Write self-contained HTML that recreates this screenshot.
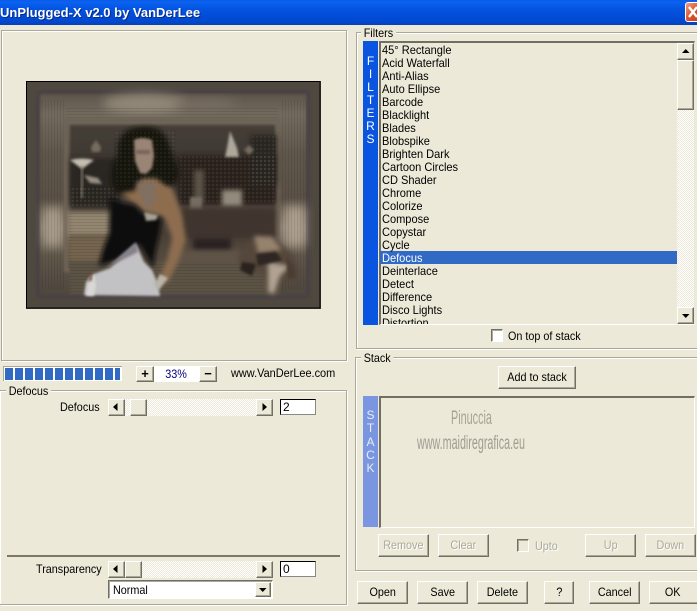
<!DOCTYPE html>
<html><head><meta charset="utf-8">
<style>
html,body{margin:0;padding:0}
body{width:697px;height:611px;overflow:hidden;background:#ece9d8;position:relative;font:12px "Liberation Sans",sans-serif;color:#000}
div,span{position:absolute;box-sizing:border-box;white-space:nowrap}
.g{border:1px solid #aca899;box-shadow:inset 1px 1px #fff,1px 1px #fff}
.l{background:#ece9d8;padding:0 3px;line-height:13px;height:13px;font-size:12px}
.b{background:#ece9d8;border:1px solid;border-color:#fff #716f64 #716f64 #fff;box-shadow:inset -1px -1px #aca899;text-align:center;line-height:20px;font-size:12px}
.b span{position:static;display:inline-block;transform:scaleX(.9)}
.d{color:#aca899;text-shadow:1px 1px #fff}
.x{transform:scaleX(.9);transform-origin:0 0}
.t{left:382px;height:13px;line-height:13px;font-size:12px;transform:scaleX(.92);transform-origin:0 0}
.h{background:repeating-conic-gradient(#fff 0 25%,#ece9d8 0 50%) 0 0/2px 2px}
.i{background:#fff;border:1px solid #000;border-right-color:#888;border-bottom-color:#888;line-height:14px;padding-left:2px;font-size:12px}
.v{left:363px;width:15px;color:#fff;text-align:center;font-size:12px;line-height:13px}
.c{background:#fff;border:1px solid;border-color:#716f64 #fff #fff #716f64;box-shadow:inset 1px 1px #aca899}
svg{position:absolute}
</style></head><body>

<div style="left:0;top:0;width:697px;height:25px;background:linear-gradient(#0a5be8 0,#0b62f0 8%,#0454e2 35%,#0048d0 85%,#0a3fb8 100%)"></div>
<div style="left:0;top:2px;height:20px;color:#fff;font:bold 13px/22px 'Liberation Sans',sans-serif;text-shadow:1px 1px #0a2a88">UnPlugged-X v2.0 by VanDerLee</div>
<div style="left:685px;top:2px;width:20px;height:20px;border-radius:3px;background:linear-gradient(135deg,#f0a080,#d8502c 50%,#c03a18);border:1px solid #fff"></div>
<svg style="left:688px;top:6px" width="9" height="12"><path d="M1 1L9 11M9 1L1 11" stroke="#fff" stroke-width="2.4"/></svg>

<!-- preview panel -->
<div class="g" style="left:1px;top:30px;width:346px;height:331px"></div>
<svg style="left:26px;top:81px" width="295" height="228" viewBox="26 81 295 228">
<defs>
<filter id="b1" x="-30%" y="-30%" width="160%" height="160%"><feGaussianBlur stdDeviation="1.200"/></filter>
<filter id="b2" x="-30%" y="-30%" width="160%" height="160%"><feGaussianBlur stdDeviation="2.500"/></filter>
<filter id="b4" x="-50%" y="-50%" width="200%" height="200%"><feGaussianBlur stdDeviation="5"/></filter>
<linearGradient id="fr" x1="0" y1="0" x2="0" y2="1">
<stop offset="0" stop-color="#5d554b"/><stop offset=".1" stop-color="#736a5e"/><stop offset=".3" stop-color="#5f564b"/><stop offset=".52" stop-color="#5a5045"/><stop offset=".66" stop-color="#8f8272"/><stop offset=".8" stop-color="#5f564a"/><stop offset="1" stop-color="#4e463d"/></linearGradient>
<linearGradient id="ins" x1="0" y1="0" x2="0" y2="1">
<stop offset="0" stop-color="#453e37"/><stop offset=".4" stop-color="#3a342e"/><stop offset=".55" stop-color="#554a40"/><stop offset=".75" stop-color="#4a4036"/><stop offset="1" stop-color="#5a4f43"/></linearGradient>
<pattern id="dith" width="4" height="4" patternUnits="userSpaceOnUse"><rect width="2" height="2" fill="#b0a898"/><rect x="2" y="2" width="2" height="2" fill="#0f0d0c"/></pattern>
<pattern id="st" width="3" height="3" patternUnits="userSpaceOnUse"><rect width="3" height="1" fill="#000" opacity=".09"/></pattern>
<pattern id="sv" width="3" height="3" patternUnits="userSpaceOnUse"><rect width="1" height="3" fill="#000" opacity=".08"/></pattern>
</defs>
<rect x="26" y="81" width="295" height="228" fill="#4f483f"/>
<rect x="40" y="94" width="267" height="202" fill="url(#fr)" filter="url(#b1)"/>
<rect x="38" y="92" width="270" height="205" fill="none" stroke="#453e48" stroke-width="2" filter="url(#b1)"/>
<ellipse cx="145" cy="104" rx="42" ry="10" fill="#918777" filter="url(#b4)"/>
<ellipse cx="205" cy="105" rx="32" ry="6" fill="#776d60" filter="url(#b4)"/>
<rect x="44" y="208" width="18" height="38" fill="#a89c8b" filter="url(#b4)"/>
<rect x="285" y="206" width="20" height="40" fill="#ac9f8f" filter="url(#b4)"/>
<rect x="40" y="100" width="25" height="190" fill="url(#sv)"/>
<rect x="282" y="100" width="25" height="190" fill="url(#sv)"/>
<rect x="66" y="106" width="212" height="16" fill="url(#st)"/>
<rect x="66" y="120" width="212" height="150" fill="none" stroke="#6e6357" stroke-width="4" filter="url(#b1)"/>
<rect x="70" y="125" width="205" height="145" fill="url(#ins)" filter="url(#b1)"/>
<!-- left bright + lamp -->
<rect x="70" y="158" width="50" height="50" fill="#2c2724" filter="url(#b2)"/>
<path d="M70 160q12-3 24 0l-8 6-4 3-4-3z" fill="#c4beb1" filter="url(#b1)"/>
<path d="M84 175l14 3 4 6-12-1z" fill="#968e81" filter="url(#b1)"/>
<rect x="81" y="166" width="2" height="32" fill="#7f776b" filter="url(#b1)"/>
<path d="M96 140l5 7-1 5h-8l-1-5z" fill="#756c5e" filter="url(#b1)"/>
<rect x="70" y="186" width="50" height="20" fill="url(#dith)" opacity=".12"/>
<rect x="68" y="212" width="50" height="24" fill="#93866f" filter="url(#b2)"/>
<rect x="68" y="236" width="46" height="26" fill="#75654f" filter="url(#b2)"/>
<rect x="68" y="212" width="50" height="50" fill="url(#st)"/>
<!-- skyline -->
<rect x="178" y="155" width="98" height="50" fill="#29241f" filter="url(#b2)"/>
<rect x="250" y="135" width="27" height="50" fill="#2b2623" filter="url(#b2)"/>
<rect x="178" y="156" width="98" height="46" fill="url(#dith)" opacity=".1"/>
<rect x="250" y="135" width="27" height="50" fill="url(#dith)" opacity=".08"/>
<path d="M230 131l7 17 2 9-14 0 2-9z" fill="#aea79c" filter="url(#b1)"/>
<path d="M249 145l5 5-5 5-5-5z" fill="#756c60" filter="url(#b1)"/>
<rect x="194" y="170" width="10" height="34" fill="#5a5247" filter="url(#b2)"/>
<rect x="222" y="190" width="20" height="16" fill="#938a7d" filter="url(#b2)"/>
<rect x="190" y="197" width="12" height="14" fill="#756c60" filter="url(#b1)"/>
<rect x="180" y="208" width="96" height="30" fill="#3f362e" filter="url(#b2)"/>
<rect x="193" y="238" width="38" height="14" fill="#2a2420" filter="url(#b2)"/>
<rect x="170" y="250" width="70" height="18" fill="#5f5346" filter="url(#b2)"/>
<rect x="70" y="262" width="210" height="32" fill="#5c5245" filter="url(#b1)"/>
<rect x="70" y="262" width="210" height="32" fill="url(#st)"/>
<!-- object right -->
<path d="M251 240l22-3 20 18 7 16-4 12-14-3-8 15-6-2-4-18-22-8-4-8 10-12z" fill="#54463a" filter="url(#b2)"/>
<path d="M254 236l18 1 10 13-24 3z" fill="#96836e" filter="url(#b2)"/>
<path d="M268 262l22 4-10 10-6 18-6-2z" fill="#b0a393" filter="url(#b2)"/>
<path d="M256 254l20-2 6 8-24 6z" fill="#2e2620" filter="url(#b1)"/>
<path d="M242 262l14 2-4 12-12-6z" fill="#2a231e" filter="url(#b1)"/>
<path d="M286 256l8 10 2 12-8 1z" fill="#4a3c30" filter="url(#b1)"/>
<!-- skin: chest + arm -->
<path d="M122 192L140 178L158 178L172 188L182 215L186 240L178 262L168 282L160 284L162 272L168 258L172 238L166 220L162 216L146 212L132 202z" fill="#8e6d50" filter="url(#b2)"/>
<!-- hair -->
<path d="M122 135q6-8 24-8q16 0 22 14q3 10 6 16q6 12 4 22q-4 8-12 6l-10-8-14 0-8 14-18 2q-6-12-4-24q2-8 6-14q-2-12 4-20z" fill="#151211" filter="url(#b2)"/>
<rect x="114" y="130" width="62" height="55" fill="url(#dith)" opacity=".08"/>
<!-- face -->
<path d="M134 140q8-4 18 0l2 16-2 12-6 6-6-1-5-12z" fill="#9a8474" filter="url(#b1)"/>
<path d="M136 150h14v4h-14z" fill="#75635a" filter="url(#b1)"/>
<path d="M136 182l20 0-2 22-8 6z" fill="#7f7062" filter="url(#b2)"/>
<!-- black dress -->
<path d="M110 198q14 6 24 6l10 10 18 4-2 14-4 18-3 18-14-24-20 16-20 6q2-14 10-32z" fill="#0c0a0a" filter="url(#b2)"/>
<path d="M144 212l14 3-2 5-10 1z" fill="#a8a193" filter="url(#b1)"/>
<!-- white skirt -->
<path d="M136 244l-26 24-16 6-8 8-2 13 76 1-2-12-6-14-8-8z" fill="#c2c1c3" filter="url(#b1)"/>
<path d="M136 242l-30 26 32-16z" fill="#85818a" filter="url(#b1)"/>
<path d="M94 274l-5 4-3 18h8l2-10z" fill="#dad8d6" filter="url(#b1)"/>
<path d="M92 270l-4 12 4-2z" fill="#6d4a3a" filter="url(#b1)"/>
<path d="M160 274l-6 11 5 5 9-12z" fill="#bab5a8" filter="url(#b1)"/>
<rect x="26.500" y="81.500" width="293.500" height="226.500" fill="none" stroke="#000"/>
</svg>

<!-- progress & zoom -->
<div style="left:3px;top:366px;width:119px;height:15px;background:#fff;box-shadow:inset 1px 1px #aca899"></div>
<div style="left:5px;top:368px;width:115px;height:12px;background:repeating-linear-gradient(90deg,#316ac5 0 8px,#fff 8px 10px)"></div>
<div style="left:154px;top:366px;width:45px;height:16px;background:#fff;color:#00007a;text-align:center;line-height:16px;font-size:12px"><span style="position:static;display:inline-block;transform:scaleX(.9)">33%</span></div>
<div class="b" style="left:136px;top:366px;width:18px;height:16px;line-height:13px;font-weight:bold;font-size:13px">+</div>
<div class="b" style="left:199px;top:366px;width:18px;height:16px;line-height:13px;font-weight:bold;font-size:13px">−</div>
<div style="left:231px;top:366px;line-height:16px;font-size:11.500px;transform:scaleX(.95);transform-origin:0 0">www.VanDerLee.com</div>

<!-- defocus group -->
<div class="g" style="left:0;top:390px;width:347px;height:215px;border-left:0"></div>
<div class="l x" style="left:6px;top:385px">Defocus</div>
<div class="x" style="left:60px;top:400px;line-height:14px">Defocus</div>
<div class="h" style="left:124px;top:399px;width:132px;height:17px"></div>
<div class="b" style="left:108px;top:399px;width:17px;height:17px"></div>
<svg style="left:113px;top:403px" width="6" height="8"><path d="M4.500 0v8L0 4z"/></svg>
<div class="b" style="left:130px;top:399px;width:17px;height:17px"></div>
<div class="b" style="left:256px;top:399px;width:17px;height:17px"></div>
<svg style="left:262px;top:403px" width="6" height="8"><path d="M0.500 0v8L5 4z"/></svg>
<div class="i" style="left:280px;top:399px;width:36px;height:16px">2</div>

<div style="left:7px;top:555px;width:333px;height:2px;background:#7d7867"></div>
<div class="x" style="left:36px;top:562px;line-height:14px">Transparency</div>
<div class="h" style="left:124px;top:561px;width:132px;height:17px"></div>
<div class="b" style="left:108px;top:561px;width:17px;height:17px"></div>
<svg style="left:113px;top:565px" width="6" height="8"><path d="M4.500 0v8L0 4z"/></svg>
<div class="b" style="left:125px;top:561px;width:17px;height:17px"></div>
<div class="b" style="left:256px;top:561px;width:17px;height:17px"></div>
<svg style="left:262px;top:565px" width="6" height="8"><path d="M0.500 0v8L5 4z"/></svg>
<div class="i" style="left:280px;top:561px;width:36px;height:16px">0</div>
<div class="c" style="left:108px;top:580px;width:165px;height:19px;padding-left:4px;line-height:18px;font-size:12px"><span class="x" style="position:static;display:inline-block">Normal</span></div>
<div class="b" style="left:255px;top:582px;width:16px;height:15px"></div>
<svg style="left:259px;top:588px" width="8" height="4"><path d="M0 0h7.500L3.750 4z"/></svg>

<!-- filters group -->
<div class="g" style="left:356px;top:32px;width:345px;height:317px"></div>
<div class="l x" style="left:361px;top:27px">Filters</div>
<div style="left:363px;top:41px;width:15px;height:284px;background:#0a55e0"></div>
<div class="v" style="top:55px">F</div><div class="v" style="top:68px">I</div><div class="v" style="top:81px">L</div><div class="v" style="top:94px">T</div><div class="v" style="top:107px">E</div><div class="v" style="top:120px">R</div><div class="v" style="top:133px">S</div>
<div style="left:379px;top:41px;width:316px;height:284px;background:#ece9d8;border:1px solid;border-width:2px 1px 1px 2px;border-color:#716f64 #ece9d8 #fff #716f64;overflow:hidden"></div>
<div style="left:380px;top:251px;width:297px;height:13px;background:#316ac5"></div>
<div class="t" style="top:44px">45° Rectangle</div>
<div class="t" style="top:57px">Acid Waterfall</div>
<div class="t" style="top:70px">Anti-Alias</div>
<div class="t" style="top:83px">Auto Ellipse</div>
<div class="t" style="top:96px">Barcode</div>
<div class="t" style="top:109px">Blacklight</div>
<div class="t" style="top:122px">Blades</div>
<div class="t" style="top:135px">Blobspike</div>
<div class="t" style="top:148px">Brighten Dark</div>
<div class="t" style="top:161px">Cartoon Circles</div>
<div class="t" style="top:174px">CD Shader</div>
<div class="t" style="top:187px">Chrome</div>
<div class="t" style="top:200px">Colorize</div>
<div class="t" style="top:213px">Compose</div>
<div class="t" style="top:226px">Copystar</div>
<div class="t" style="top:239px">Cycle</div>
<div class="t" style="top:252px;color:#fff">Defocus</div>
<div class="t" style="top:265px">Deinterlace</div>
<div class="t" style="top:278px">Detect</div>
<div class="t" style="top:291px">Difference</div>
<div class="t" style="top:304px">Disco Lights</div>
<div class="t" style="top:317px;height:7px;overflow:hidden">Distortion</div>
<div class="h" style="left:677px;top:43px;width:17px;height:281px"></div>
<div class="b" style="left:677px;top:43px;width:17px;height:17px"></div>
<svg style="left:682px;top:49px" width="8" height="4"><path d="M0 4h7.500L3.750 0z"/></svg>
<div class="b" style="left:677px;top:60px;width:17px;height:50px"></div>
<div class="b" style="left:677px;top:307px;width:17px;height:17px"></div>
<svg style="left:682px;top:314px" width="8" height="4"><path d="M0 0h7.500L3.750 4z"/></svg>
<div class="c" style="left:491px;top:329px;width:12px;height:13px"></div>
<div class="x" style="left:508px;top:329px;line-height:14px">On top of stack</div>

<!-- stack group -->
<div class="g" style="left:355px;top:357px;width:346px;height:214px"></div>
<div class="l x" style="left:361px;top:352px">Stack</div>
<div class="b" style="left:498px;top:366px;width:78px;height:23px;line-height:21px"><span>Add to stack</span></div>
<div style="left:363px;top:396px;width:15px;height:131px;background:#7b96e0"></div>
<div class="v" style="top:409px;color:#e8ecf8">S</div><div class="v" style="top:422px;color:#e8ecf8">T</div><div class="v" style="top:436px;color:#e8ecf8">A</div><div class="v" style="top:449px;color:#e8ecf8">C</div><div class="v" style="top:462px;color:#e8ecf8">K</div>
<div style="left:379px;top:396px;width:316px;height:132px;border:1px solid;border-width:2px 1px 1px 2px;border-color:#716f64 #fff #fff #716f64"></div>
<div style="left:451px;top:408px;color:#a6a397;font-size:19px;line-height:22px;transform:scaleX(.57);transform-origin:0 0">Pinuccia</div>
<div style="left:417px;top:433px;color:#a09d91;font-size:19px;line-height:22px;transform:scaleX(.565);transform-origin:0 0">www.maidiregrafica.eu</div>

<div class="b d" style="left:378px;top:534px;width:51px;height:23px"><span>Remove</span></div>
<div class="b d" style="left:438px;top:534px;width:51px;height:23px"><span>Clear</span></div>
<div class="c" style="left:517px;top:539px;width:12px;height:13px;background:#ece9d8"></div>
<div class="d x" style="left:535px;top:539px;line-height:14px">Upto</div>
<div class="b d" style="left:585px;top:534px;width:51px;height:23px"><span>Up</span></div>
<div class="b d" style="left:645px;top:534px;width:51px;height:23px"><span>Down</span></div>

<div class="b" style="left:357px;top:581px;width:51px;height:23px"><span>Open</span></div>
<div class="b" style="left:417px;top:581px;width:51px;height:23px"><span>Save</span></div>
<div class="b" style="left:477px;top:581px;width:51px;height:23px"><span>Delete</span></div>
<div class="b" style="left:544px;top:581px;width:30px;height:23px"><span>?</span></div>
<div class="b" style="left:589px;top:581px;width:51px;height:23px"><span>Cancel</span></div>
<div class="b" style="left:649px;top:581px;width:51px;height:23px;padding-right:4px"><span>OK</span></div>
</body></html>
